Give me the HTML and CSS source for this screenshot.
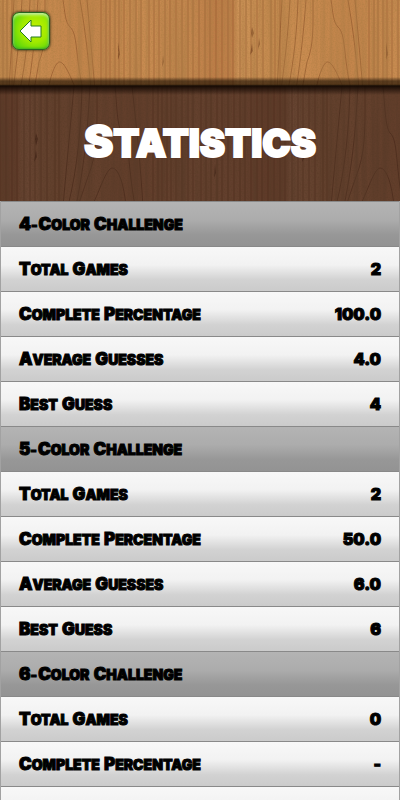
FILE: index.html
```html
<!DOCTYPE html>
<html lang="en">

<head>
    <meta charset="UTF-8">
    <meta name="viewport" content="width=device-width, initial-scale=1.0">
    <title>Statistics</title>
    <link rel="stylesheet" href="styles.css">
</head>

<body>
    <header class="topbar">
        <svg class="wood" aria-hidden="true">
            <defs>
                <filter id="grain" x="0" y="0" width="100%" height="100%">
                    <feTurbulence type="fractalNoise" baseFrequency="0.22 0.006" numOctaves="3" seed="8" />
                    <feColorMatrix values="0 0 0 0 0.42  0 0 0 0 0.2  0 0 0 0 0.06  1.5 0 0 0 -0.58" />
                </filter>
                <filter id="speck" x="0" y="0" width="100%" height="100%">
                    <feTurbulence type="fractalNoise" baseFrequency="0.7" numOctaves="2" seed="3" />
                    <feColorMatrix values="0 0 0 0 0.4  0 0 0 0 0.2  0 0 0 0 0.05  1 0 0 0 -0.38" />
                </filter>
                <linearGradient id="plank">
                    <stop offset="0" stop-color="#c58a4f" />
                    <stop offset="0.14" stop-color="#c98b50" />
                    <stop offset="0.3" stop-color="#c3844b" />
                    <stop offset="0.5" stop-color="#c88b51" />
                    <stop offset="0.72" stop-color="#c4864e" />
                    <stop offset="0.8" stop-color="#bd7c47" />
                    <stop offset="0.87" stop-color="#bf7f49" />
                    <stop offset="0.89" stop-color="#ce9358" />
                    <stop offset="1" stop-color="#c58a4f" />
                </linearGradient>
                <pattern id="lightWood" width="268" height="134" patternUnits="userSpaceOnUse">
                    <rect width="268" height="134" fill="url(#plank)" />
                    <g fill="none" stroke="#80451f" stroke-opacity="0.55">
                        <path d="M48 90 C50 78 55 63 59 62 C64 61 70 75 76 90" />
                        <path d="M63 0 C65 12 65 22 70 27 C78 34 75 55 83 90" />
                        <path d="M45 0 C45 25 46 45 39 62 L34 90" />
                        <path d="M38 0 C36 25 34 50 28 90" />
                        <path d="M30 0 C29 30 26 60 20 90" />
                        <path d="M80 0 C86 35 88 55 91 90" />
                        <path d="M22 0 C20 35 17 60 13 90" />
                        <path d="M87 0 L95 90 M14 0 L9 90" />
                    </g>
                    <g stroke="#793f1d" stroke-opacity="0.42">
                        <path d="M3 0V134M7 0V134M12 0V134M101 0V134M106 0V134M110 0V134M115 0V134M119 0V134M124 0V134M130 0V134M136 0V134M141 0V134M149 0V134M154 0V134M159 0V134M165 0V134M170 0V134M176 0V134M182 0V134M188 0V134M193 0V134M199 0V134M205 0V134M210 0V134M216 0V134M222 0V134M228 0V134M233 0V134M240 0V134M246 0V134M251 0V134M257 0V134M263 0V134" />
                    </g>
                    <g fill="#673315" fill-opacity="0.6">
                        <path d="M118 42 L120 54 L118 60Z" />
                        <path d="M163 55 L164 62 L162 67Z" />
                        <path d="M252 27 L254 33 L252 38 L251 33Z" />
                        <path d="M252 43 L253 51 L250 55Z" />
                        <path d="M259 38 L260 44 L258 49Z" />
                    </g>
                </pattern>
                <pattern id="darkWood" width="268" height="134" patternUnits="userSpaceOnUse" patternTransform="translate(52 0)">
                    <rect width="268" height="134" fill="url(#plank)" />
                    <g fill="none" stroke="#6b3317" stroke-opacity="0.45">
                        <path d="M40 120 C48 104 54 83 60 82 C67 82 72 100 74 120" />
                        <path d="M63 0 C65 20 65 40 70 47 C78 54 75 75 83 120" />
                        <path d="M45 0 C45 35 46 60 39 82 L26 120" />
                        <path d="M38 0 C36 35 34 70 24 120" />
                        <path d="M30 0 C29 40 26 80 16 120" />
                        <path d="M80 0 C86 55 88 75 91 120" />
                        <path d="M22 0 L11 120" />
                    </g>
                    <g stroke="#793f1d" stroke-opacity="0.42">
                        <path d="M3 0V134M7 0V134M101 0V134M106 0V134M110 0V134M115 0V134M119 0V134M124 0V134M130 0V134M136 0V134M141 0V134M149 0V134M154 0V134M159 0V134M165 0V134M170 0V134M176 0V134M182 0V134M188 0V134M193 0V134M199 0V134M205 0V134M210 0V134M216 0V134M222 0V134M228 0V134M233 0V134M240 0V134M246 0V134M251 0V134M257 0V134M263 0V134" />
                    </g>
                    <g fill="#5a2810" fill-opacity="0.5">
                        <path d="M252 47 L254 53 L252 60 L251 53Z" />
                        <path d="M252 64 L253 71 L250 76Z" />
                        <path d="M163 78 L164 87 L162 92Z" />
                    </g>
                </pattern>
            </defs>
            <rect width="100%" height="100%" fill="url(#lightWood)" />
            <rect width="100%" height="100%" filter="url(#grain)" />
            <rect width="100%" height="100%" filter="url(#speck)" />
        </svg>
        <button class="back" type="button" aria-label="Back">
            <svg viewBox="0 0 24 24" width="24" height="24" aria-hidden="true">
                <path d="M1 12 L12 1 V7 H22 V18 H12 V23 Z" fill="#fff" stroke="#247a20" stroke-linejoin="round" />
            </svg>
        </button>
    </header>

    <section class="banner">
        <svg class="wood" aria-hidden="true">
            <rect width="100%" height="100%" fill="url(#darkWood)" />
            <rect width="100%" height="100%" filter="url(#grain)" />
            <rect width="100%" height="100%" filter="url(#speck)" />
            <rect class="stain" width="100%" height="100%" />
        </svg>
        <h1 class="title">Statistics</h1>
    </section>

    <main class="list">
        <table class="stats">
            <tbody>
                <tr class="group"><th colspan="2" scope="rowgroup"><span>4-</span><span>Color</span> <span>Challenge</span></th></tr>
                <tr><th scope="row"><span>Total</span> <span>Games</span></th><td>2</td></tr>
                <tr><th scope="row"><span>Complete</span> <span>Percentage</span></th><td>100.0</td></tr>
                <tr><th scope="row"><span>Average</span> <span>Guesses</span></th><td>4.0</td></tr>
                <tr><th scope="row"><span>Best</span> <span>Guess</span></th><td>4</td></tr>
            </tbody>
            <tbody>
                <tr class="group"><th colspan="2" scope="rowgroup"><span>5-</span><span>Color</span> <span>Challenge</span></th></tr>
                <tr><th scope="row"><span>Total</span> <span>Games</span></th><td>2</td></tr>
                <tr><th scope="row"><span>Complete</span> <span>Percentage</span></th><td>50.0</td></tr>
                <tr><th scope="row"><span>Average</span> <span>Guesses</span></th><td>6.0</td></tr>
                <tr><th scope="row"><span>Best</span> <span>Guess</span></th><td>6</td></tr>
            </tbody>
            <tbody>
                <tr class="group"><th colspan="2" scope="rowgroup"><span>6-</span><span>Color</span> <span>Challenge</span></th></tr>
                <tr><th scope="row"><span>Total</span> <span>Games</span></th><td>0</td></tr>
                <tr><th scope="row"><span>Complete</span> <span>Percentage</span></th><td>-</td></tr>
                <tr><th scope="row"></th><td></td></tr>
            </tbody>
        </table>
    </main>
</body>

</html>
```

FILE: styles.css
```css
* {
    box-sizing: border-box;
}

body {
    margin: 0;
    height: 100vh;
    display: flex;
    flex-direction: column;
    overflow: hidden;
    font-family: Inter, "Open Sans", sans-serif;
    font-weight: 900;
    color: #000;
}

.topbar,
.banner {
    position: relative;
    flex: none;
}

.wood {
    position: absolute;
    inset: 0;
    width: 100%;
    height: 100%;
    z-index: -1;
}

.stain {
    fill: #80768f;
    mix-blend-mode: multiply;
}

.topbar {
    padding: 12px 12px 36px;
}

/* shaded lower edge of the light plank */
.topbar::after {
    content: "";
    position: absolute;
    inset: auto 0 0;
    height: 9px;
    background: linear-gradient(rgba(20, 10, 0, 0), rgba(20, 10, 0, 0.6) 45%, rgba(30, 15, 0, 0.65) 80%, #120a04);
}

.back {
    display: flex;
    align-items: center;
    justify-content: center;
    width: 38px;
    height: 38px;
    padding: 0;
    border: 1px solid #27661f;
    border-radius: 7px;
    background: radial-gradient(circle at 60% 45%, #c5f000 0, #9fea00 45%, #42d010 95%);
    box-shadow: inset 0 2px 3px rgba(235, 255, 190, 0.8), inset 0 0 2px 1px #3fae22, 0 0 2px 1px rgba(50, 50, 20, 0.6);
    cursor: pointer;
}

.banner {
    padding: 32px 16px;
    background: linear-gradient(rgba(15, 5, 0, 0.9), rgba(15, 5, 0, 0) 9px);
}

.title {
    margin: 0;
    font-size: 38px;
    font-weight: 900;
    line-height: 51px;
    text-align: center;
    text-transform: uppercase;
    color: #fff;
    -webkit-text-stroke: 2px #fff;
    text-shadow: 0 0 2px #5a0c08;
}

.title::first-letter {
    font-size: 44px;
    line-height: 44px;
}

.list {
    flex: 1;
    min-height: 0;
    overflow-y: auto;
    scrollbar-width: none;
}

.stats {
    width: 100%;
    border-collapse: separate;
    border-spacing: 0;
    border: solid #a2a2a2;
    border-width: 0 1px;
}

.stats tr {
    height: 45px;
    background: linear-gradient(#f8f8f8, #f2f2f2 42%, #d2d2d2 75%, #cbcbcb);
}

.stats .group {
    background: linear-gradient(#b4b4b4, #acacac 42%, #979797 75%, #939393);
}

.stats th,
.stats td {
    height: 45px;
    padding: 0 18px;
    border-top: 1px solid #898989;
    font-size: 16px;
    font-weight: 900;
    line-height: 20px;
    text-align: left;
    text-transform: uppercase;
    -webkit-text-stroke: 1px #000;
}

.stats th span {
    display: inline-block;
    font-size: 14px;
}

.stats th span + span {
    margin-left: 1px;
}

.stats th span::first-letter {
    font-size: 17px;
    line-height: 16px;
}

.stats td {
    text-align: right;
}
```
